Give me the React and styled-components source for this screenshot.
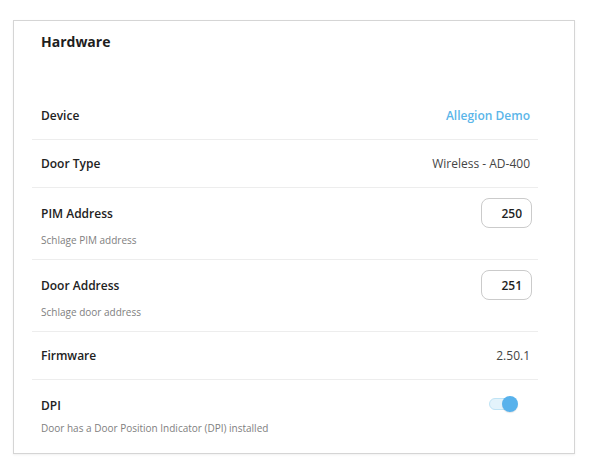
import React, { useState } from "react";
import styled, { createGlobalStyle } from "styled-components";

const GlobalStyle = createGlobalStyle`
  body {
    margin: 0;
    background: #ffffff;
    font-family: "Open Sans", "Noto Sans", sans-serif;
    color: #222222;
  }
`;

const rows = [
  { title: "Device", value: "Allegion Demo", kind: "link" },
  { title: "Door Type", value: "Wireless - AD-400", kind: "text" },
  { title: "PIM Address", sub: "Schlage PIM address", value: "250", kind: "input" },
  { title: "Door Address", sub: "Schlage door address", value: "251", kind: "input" },
  { title: "Firmware", value: "2.50.1", kind: "text" },
  { title: "DPI", sub: "Door has a Door Position Indicator (DPI) installed", kind: "toggle" },
];

const App = () => {
  const [dpi, setDpi] = useState(true);

  return (
    <>
      <GlobalStyle />
      <Page>
        <Card>
          <Header>Hardware</Header>
          <List>
            {rows.map((row, i) => (
              <Row key={row.title} $tall={!!row.sub} $last={i === rows.length - 1}>
                <RowTop $tall={!!row.sub}>
                  <Title>{row.title}</Title>
                  {row.kind === "link" && <LinkValue href="#">{row.value}</LinkValue>}
                  {row.kind === "text" && <Value>{row.value}</Value>}
                  {row.kind === "input" && <NumberInput defaultValue={row.value} />}
                  {row.kind === "toggle" && (
                    <Toggle $on={dpi} onClick={() => setDpi(!dpi)}>
                      <Knob $on={dpi} />
                    </Toggle>
                  )}
                </RowTop>
                {row.sub && <Sub $compact={row.kind === "toggle"}>{row.sub}</Sub>}
              </Row>
            ))}
          </List>
        </Card>
      </Page>
    </>
  );
};

const Page = styled.div`
  padding: 20px 21px 18px 13px;
`;

const Card = styled.div`
  border: 1px solid #d5d5d5;
  box-shadow: 0 1px 2px rgba(0, 0, 0, 0.06);
  padding: 11px 36px 9px 18px;
  height: 434px;
  box-sizing: border-box;
`;

const Header = styled.h2`
  margin: 0;
  padding: 0 9px;
  font-size: 14px;
  font-weight: 700;
  line-height: 20px;
  color: #1e1e1e;
`;

const List = styled.div`
  margin-top: 40px;
  display: flex;
  flex-direction: column;
`;

const Row = styled.div`
  display: flex;
  flex-direction: column;
  justify-content: ${(p) => (p.$tall ? "flex-start" : "center")};
  height: ${(p) => (p.$tall ? "72px" : "48px")};
  padding: ${(p) => (p.$tall ? "10px 8px 0 9px" : "0 8px 0 9px")};
  box-sizing: border-box;
  border-bottom: ${(p) => (p.$last ? "none" : "1px solid #ededed")};
`;

const RowTop = styled.div`
  display: flex;
  align-items: center;
  justify-content: space-between;
  min-height: ${(p) => (p.$tall ? "30px" : "22px")};
`;

const Title = styled.span`
  font-size: 12px;
  font-weight: 600;
  color: #222222;
`;

const Value = styled.span`
  font-size: 12px;
  color: #454545;
`;

const LinkValue = styled.a`
  font-size: 12px;
  font-weight: 600;
  color: #5bb6e9;
  text-decoration: none;
`;

const NumberInput = styled.input`
  width: 51px;
  height: 30px;
  box-sizing: border-box;
  border: 1px solid #cbcbcb;
  border-radius: 8px;
  padding: 0 9px 0 4px;
  margin-right: -2px;
  text-align: right;
  font-family: "Open Sans", sans-serif;
  font-size: 12px;
  font-weight: 600;
  color: #1e1e1e;
  background: #fff;
  outline: none;
`;

const Sub = styled.span`
  margin-top: ${(p) => (p.$compact ? "1px" : "5px")};
  font-size: 10px;
  color: #808080;
  line-height: 14px;
`;

const Toggle = styled.div`
  position: relative;
  width: 28px;
  height: 12px;
  margin-right: 13px;
  margin-top: -3px;
  border-radius: 6px;
  box-sizing: border-box;
  background: ${(p) => (p.$on ? "#e3f3fb" : "#eeeeee")};
  border: 1px solid ${(p) => (p.$on ? "#bfe3f5" : "#cccccc")};
  cursor: pointer;
`;

const Knob = styled.span`
  position: absolute;
  top: -3px;
  left: ${(p) => (p.$on ? "12px" : "-1px")};
  width: 16px;
  height: 16px;
  border-radius: 50%;
  background: ${(p) => (p.$on ? "#58b2ec" : "#ffffff")};
  box-shadow: 0 1px 1px rgba(0, 0, 0, 0.1);
`;

export default App;
